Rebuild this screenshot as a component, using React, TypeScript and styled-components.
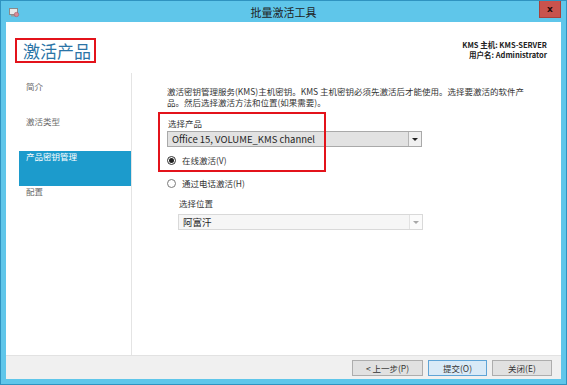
import React from "react";
import styled, { createGlobalStyle } from "styled-components";

const Global = createGlobalStyle`
  html, body { margin: 0; padding: 0; width: 567px; height: 385px; overflow: hidden; background: #5fc6ea; }
  body { font-family: "Noto Sans CJK SC", "Noto Sans", sans-serif; color: #222; }
  * { box-sizing: border-box; }
`;

const Window = styled.div`
  width: 567px;
  height: 385px;
  display: flex;
  flex-direction: column;
  background: #5fc6ea;
  border: 1px solid #2f93c0;
  padding: 0 5px 5px;
`;

const TitleBar = styled.div`
  height: 21px;
  display: grid;
  grid-template-columns: 1fr auto 1fr;
  align-items: center;
`;

const TitleIcon = styled.svg`
  width: 11px;
  height: 11px;
  margin-left: 3px;
  margin-top: 1px;
`;

const TitleText = styled.div`
  font-size: 11px;
  line-height: 14px;
  color: #1e1e1e;
`;

const CloseButton = styled.div`
  justify-self: end;
  align-self: start;
  width: 22px;
  height: 17px;
  background: #c9534d;
  border: 1px solid #a8413c;
  border-top: none;
  display: flex;
  align-items: center;
  justify-content: center;
  font-family: "DejaVu Sans", sans-serif;
  font-weight: bold;
  font-size: 9px;
  color: #2a0b0a;
`;

const Body = styled.div`
  flex: 1;
  background: #fff;
  display: flex;
  flex-direction: column;
  min-height: 0;
`;

const Header = styled.div`
  height: 51px;
  display: flex;
  justify-content: space-between;
  align-items: flex-start;
  padding: 16px 14px 0 9px;
`;

const PageTitle = styled.div`
  border: 2px solid #e3131b;
  padding: 0 3px 0 6px;
  font-size: 17px;
  line-height: 21px;
  color: #2b74a6;
`;

const HostInfo = styled.div`
  margin-top: 2px;
  text-align: right;
  font-size: 7.5px;
  line-height: 10px;
  font-weight: bold;
  color: #222;
`;

const Content = styled.div`
  flex: 1;
  display: flex;
  min-height: 0;
`;

const Nav = styled.div`
  width: 126px;
  border-right: 1px solid #e4e4e4;
  padding: 8px 0 0 13px;
  display: flex;
  flex-direction: column;
`;

const NavItem = styled.div<{ $active?: boolean }>`
  height: 35px;
  padding: 0 0 0 7px;
  font-size: 8.5px;
  line-height: 11px;
  color: ${(p) => (p.$active ? "#fff" : "#6a6a6a")};
  background: ${(p) => (p.$active ? "#1c9bcc" : "transparent")};
`;

const Main = styled.div`
  flex: 1;
  position: relative;
  padding: 13px 0 0 35px;
  display: flex;
  flex-direction: column;
`;

const Desc = styled.div`
  font-size: 8.5px;
  line-height: 11px;
  color: #333;
`;

const Label = styled.div<{ $mt: number }>`
  margin-top: ${(p) => p.$mt}px;
  font-size: 8.5px;
  line-height: 10px;
  color: #333;
  padding-left: 1px;
`;

const Select = styled.div<{ $disabled?: boolean; $w: number; $mt: number }>`
  width: ${(p) => p.$w}px;
  height: 16px;
  margin-top: ${(p) => p.$mt}px;
  display: flex;
  border: 1px solid ${(p) => (p.$disabled ? "#d9d9d9" : "#a9a9a9")};
  background: ${(p) => (p.$disabled ? "#f6f6f6" : "#e2e2e2")};
`;

const SelectValue = styled.div`
  flex: 1;
  padding-left: 4px;
  font-size: 9.5px;
  line-height: 14px;
  color: #1f1f1f;
`;

const SelectArrow = styled.div<{ $disabled?: boolean }>`
  width: 13px;
  border-left: 1px solid ${(p) => (p.$disabled ? "#e2e2e2" : "#b5b5b5")};
  background: ${(p) => (p.$disabled ? "#fbfbfb" : "#f0f0f0")};
  display: flex;
  align-items: center;
  justify-content: center;
  &::after {
    content: "";
    border-left: 3px solid transparent;
    border-right: 3px solid transparent;
    border-top: 3px solid ${(p) => (p.$disabled ? "#a8a8a8" : "#222")};
  }
`;

const RadioRow = styled.div<{ $mt: number }>`
  margin-top: ${(p) => p.$mt}px;
  height: 12px;
  display: flex;
  align-items: center;
  gap: 6px;
  font-size: 8.5px;
  color: #333;
`;

const RadioCircle = styled.span<{ $checked?: boolean }>`
  width: 9px;
  height: 9px;
  border-radius: 50%;
  border: 1px solid ${(p) => (p.$checked ? "#333" : "#7a7a7a")};
  background: #fff;
  display: flex;
  align-items: center;
  justify-content: center;
  &::after {
    content: "";
    width: 5px;
    height: 5px;
    border-radius: 50%;
    background: ${(p) => (p.$checked ? "#222" : "transparent")};
  }
`;

const Indent = styled.div`
  margin-left: 11px;
  display: flex;
  flex-direction: column;
`;

const Annotation = styled.div`
  position: absolute;
  left: 26px;
  top: 39px;
  width: 168px;
  height: 60px;
  border: 2px solid #e3131b;
  pointer-events: none;
`;

const Footer = styled.div`
  height: 24px;
  background: #f0f0f0;
  border-top: 1px solid #e2e2e2;
  display: flex;
  justify-content: flex-end;
  align-items: center;
  gap: 5px;
  padding-right: 9px;
`;

const Button = styled.div<{ $primary?: boolean; $w: number }>`
  width: ${(p) => p.$w}px;
  height: 16px;
  display: flex;
  align-items: center;
  justify-content: center;
  font-size: 8.5px;
  color: #333;
  background: ${(p) => (p.$primary ? "#d9eaf7" : "#e1e1e1")};
  border: 1px solid ${(p) => (p.$primary ? "#5fa4d6" : "#adadad")};
`;

export default function App() {
  return (
    <>
      <Global />
      <Window>
        <TitleBar>
          <TitleIcon viewBox="0 0 11 11">
            <rect x="0.5" y="1.5" width="8" height="6" fill="#e9e9e9" stroke="#8a8a8a" />
            <rect x="2" y="8" width="5" height="1.5" fill="#9a9a9a" />
            <circle cx="7.5" cy="7.5" r="2.2" fill="#d98a96" stroke="#a45a66" strokeWidth="0.6" />
          </TitleIcon>
          <TitleText>批量激活工具</TitleText>
          <CloseButton>x</CloseButton>
        </TitleBar>
        <Body>
          <Header>
            <PageTitle>激活产品</PageTitle>
            <HostInfo>
              KMS 主机: KMS-SERVER
              <br />
              用户名: Administrator
            </HostInfo>
          </Header>
          <Content>
            <Nav>
              <NavItem>简介</NavItem>
              <NavItem>激活类型</NavItem>
              <NavItem $active>产品密钥管理</NavItem>
              <NavItem>配置</NavItem>
            </Nav>
            <Main>
              <Desc>
                激活密钥管理服务(KMS)主机密钥。KMS 主机密钥必须先激活后才能使用。选择要激活的软件产
                <br />
                品。然后选择激活方法和位置(如果需要)。
              </Desc>
              <Label $mt={10}>选择产品</Label>
              <Select $w={255} $mt={3}>
                <SelectValue>Office 15, VOLUME_KMS channel</SelectValue>
                <SelectArrow />
              </Select>
              <RadioRow $mt={7}>
                <RadioCircle $checked />
                在线激活(V)
              </RadioRow>
              <RadioRow $mt={11}>
                <RadioCircle />
                通过电话激活(H)
              </RadioRow>
              <Indent>
                <Label $mt={9}>选择位置</Label>
                <Select $w={245} $mt={6} $disabled>
                  <SelectValue>阿富汗</SelectValue>
                  <SelectArrow $disabled />
                </Select>
              </Indent>
              <Annotation />
            </Main>
          </Content>
          <Footer>
            <Button $w={71}>&lt; 上一步(P)</Button>
            <Button $w={59} $primary>提交(O)</Button>
            <Button $w={60}>关闭(E)</Button>
          </Footer>
        </Body>
      </Window>
    </>
  );
}
